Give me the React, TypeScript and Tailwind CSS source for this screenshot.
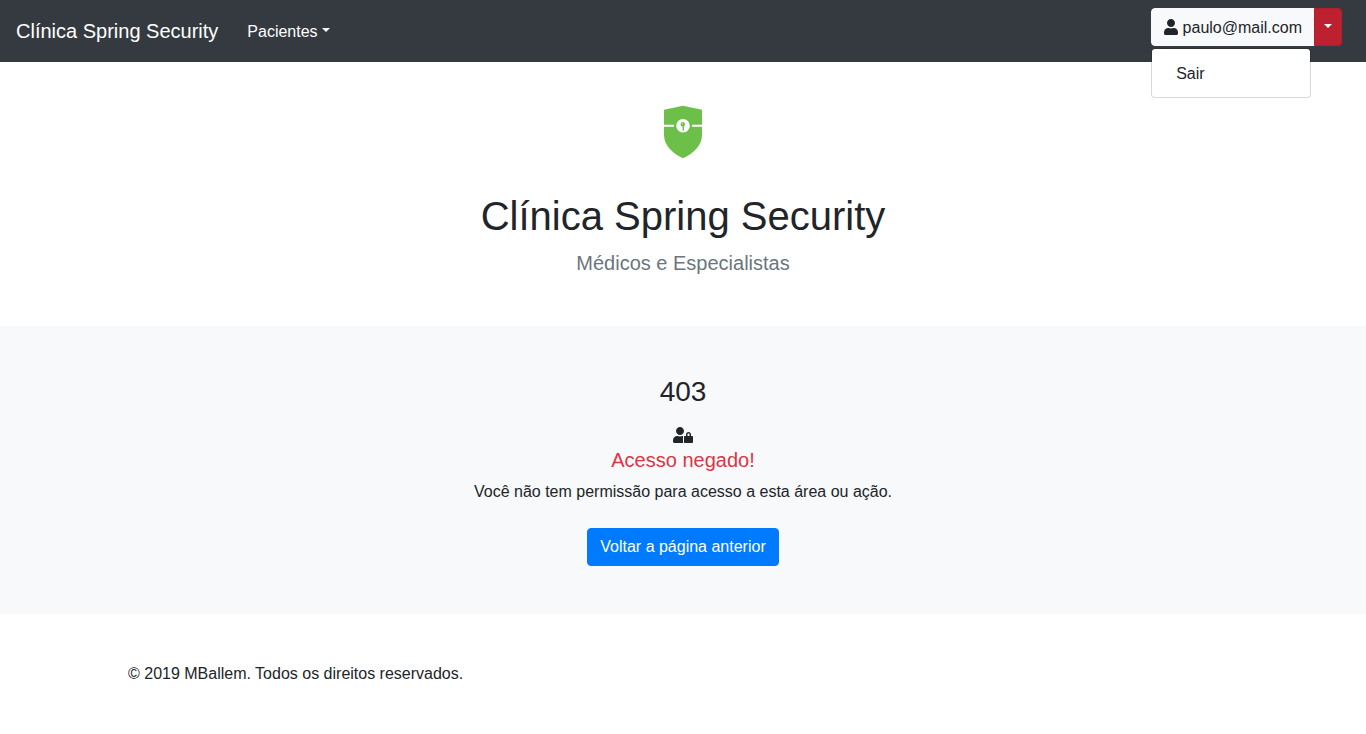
import { useState } from "react";

function Caret() {
  return (
    <span
      aria-hidden="true"
      className="mb-1 inline-block border-x-4 border-t-4 border-x-transparent border-t-current align-baseline"
    />
  );
}

function UserIcon() {
  return (
    <svg
      width="14"
      height="16"
      viewBox="0 0 448 512"
      fill="currentColor"
      aria-hidden="true"
      className="inline-block align-[-2px]"
    >
      <path d="M224 256c70.700 0 128-57.300 128-128S294.700 0 224 0 96 57.300 96 128s57.300 128 128 128zm89.600 32h-16.700c-22.200 10.200-46.900 16-72.900 16s-50.600-5.800-72.900-16h-16.700C60.200 288 0 348.200 0 422.400V464c0 26.500 21.500 48 48 48h352c26.500 0 48-21.500 48-48v-41.600c0-74.200-60.200-134.400-134.400-134.400z" />
    </svg>
  );
}

function UserLockIcon() {
  return (
    <svg
      width="20"
      height="16"
      viewBox="0 0 640 512"
      fill="currentColor"
      aria-hidden="true"
      className="mb-[5px] mt-[17px]"
    >
      <path d="M320 320c0-11.100 3.100-21.400 8.100-30.500-4.800-.5-9.500-1.500-14.500-1.500h-16.700c-22.200 10.200-46.900 16-72.900 16s-50.600-5.800-72.900-16h-16.700C60.200 288 0 348.200 0 422.400V464c0 26.500 21.500 48 48 48h280.900c-5.500-9.500-8.900-20.300-8.900-32V320zM224 256c70.700 0 128-57.300 128-128S294.700 0 224 0 96 57.300 96 128s57.300 128 128 128z" />
      <path d="M608 288h-32v-48c0-44.100-35.900-80-80-80s-80 35.900-80 80v48h-32c-17.700 0-32 14.300-32 32v160c0 17.700 14.300 32 32 32h224c17.700 0 32-14.300 32-32V320c0-17.700-14.300-32-32-32zm-80 0h-64v-48c0-17.600 14.400-32 32-32s32 14.400 32 32v48z" />
    </svg>
  );
}

function ShieldLogo() {
  return (
    <svg width="38" height="54" viewBox="0 0 38 54" role="img" aria-label="Clínica">
      <path
        fill="#6cc04a"
        d="M0 4.8 19 .8l19 4V30c0 10-8 18.300-19 23.300C8 48.300 0 40 0 30Z"
      />
      <path stroke="#fff" strokeWidth="2" d="M0 20.800h10M28 20.800h10" />
      <circle cx="19" cy="20.800" r="6.800" fill="#fff" />
      <circle cx="18.800" cy="19.300" r="2.200" fill="#6cc04a" />
      <path stroke="#6cc04a" strokeWidth="1.500" d="M19.300 20v5.600" />
      <circle cx="18.500" cy="18.700" r=".5" fill="#fff" />
    </svg>
  );
}

function UserMenu() {
  const [open, setOpen] = useState(true);
  return (
    <div className="relative mb-2 mr-2 flex">
      <button
        type="button"
        className="rounded-l border border-[#f8f9fa] bg-[#f8f9fa] px-3 pb-[5px] pt-[7px] leading-6 text-[#212529]"
      >
        <UserIcon /> paulo@mail.com
      </button>
      <button
        type="button"
        aria-label="Abrir menu do usuário"
        aria-expanded={open}
        onClick={() => setOpen(!open)}
        className="-ml-px rounded-r border border-[#b21f2d] bg-[#bd2130] px-[9px] py-[6px] leading-6 text-white"
      >
        <Caret />
      </button>
      {open && (
        <div className="absolute left-0 top-10 min-w-40 rounded border border-black/15 bg-white bg-clip-padding py-2">
          <a href="#sair" className="block px-6 pb-[3px] pt-[5px] text-[#212529]">
            Sair
          </a>
        </div>
      )}
    </div>
  );
}

export default function App() {
  return (
    <div className="bg-white font-['Liberation_Sans',Arial,sans-serif] text-base text-[#212529]">
      <nav className="flex items-center bg-[#343a40] px-4 py-2 text-white">
        <a href="#inicio" className="mr-[21px] text-xl leading-[30px]">
          Clínica Spring Security
        </a>
        <button type="button" className="flex items-center gap-1 px-2 pb-[7px] pt-[9px] leading-6">
          <span>Pacientes</span>
          <Caret />
        </button>
        <div className="ml-auto">
          <UserMenu />
        </div>
      </nav>

      <header className="flex flex-col items-center px-4 pb-12 pt-[43px] text-center">
        <ShieldLogo />
        <h1 className="mb-2 mt-[33px] text-[40px] leading-[48px]">Clínica Spring Security</h1>
        <p className="text-xl leading-[30px] text-[#6c757d]">Médicos e Especialistas</p>
      </header>

      <main className="flex flex-col items-center bg-[#f8f9fa] px-4 py-12 text-center">
        <h2 className="text-[28px] leading-9">403</h2>
        <UserLockIcon />
        <h3 className="mb-2 text-xl leading-6 text-[#dc3545]">Acesso negado!</h3>
        <p className="mb-6">Você não tem permissão para acesso a esta área ou ação.</p>
        <a
          href="#voltar"
          className="rounded border border-[#007bff] bg-[#007bff] px-3 py-[6px] leading-6 text-white"
        >
          Voltar a página anterior
        </a>
      </main>

      <footer className="mx-auto max-w-[1140px] px-[15px] py-12">
        <p>© 2019 MBallem. Todos os direitos reservados.</p>
      </footer>
    </div>
  );
}
